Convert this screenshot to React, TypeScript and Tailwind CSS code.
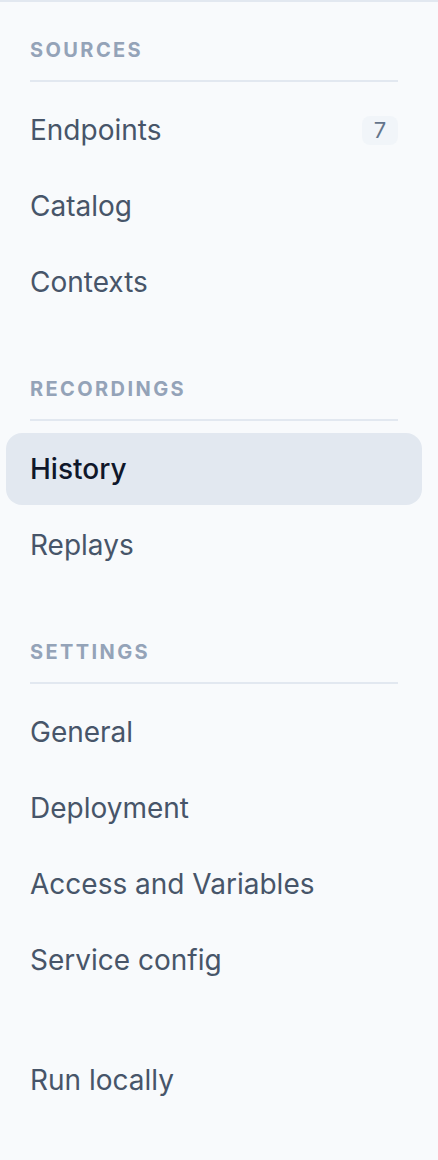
import React from "react";

type NavItem = {
  label: string;
  count?: number;
  active?: boolean;
};

type NavSection = {
  title: string;
  items: NavItem[];
};

const SECTIONS: NavSection[] = [
  {
    title: "Sources",
    items: [{ label: "Endpoints", count: 7 }, { label: "Catalog" }, { label: "Contexts" }],
  },
  {
    title: "Recordings",
    items: [{ label: "History", active: true }, { label: "Replays" }],
  },
  {
    title: "Settings",
    items: [
      { label: "General" },
      { label: "Deployment" },
      { label: "Access and Variables" },
      { label: "Service config" },
    ],
  },
];

function NavRow({ item }: { item: NavItem }) {
  return (
    <a
      href="#"
      className={`flex h-[72px] items-center justify-between rounded-2xl px-6 text-[28px] ${
        item.active
          ? "bg-[#e2e8f0] font-medium text-[#0f172a]"
          : "text-[#475569] hover:bg-[#f1f5f9]"
      }`}
    >
      <span>{item.label}</span>
      {item.count !== undefined && (
        <span className="flex h-[29px] w-9 items-center justify-center rounded-lg bg-[#f1f5f9] text-[22px] text-[#64748b]">
          {item.count}
        </span>
      )}
    </a>
  );
}

export default function App() {
  return (
    <div
      className="min-h-screen w-full border-t-2 border-[#e2e8f0] bg-[#f8fafc] pb-10 pl-1.5 pr-4 pt-[34px]"
      style={{ fontFamily: "Inter, 'Noto Sans', sans-serif" }}
    >
      <nav className="flex flex-col">
        {SECTIONS.map((section, i) => (
          <div key={section.title} className={i === 0 ? "" : "mt-[57px]"}>
            {/* section heading */}
            <div className="mx-6 border-b-2 border-[#e2e8f0] pb-4">
              <h3 className="text-[20px] font-bold uppercase leading-7 tracking-[0.12em] text-[#94a3b8]">
                {section.title}
              </h3>
            </div>
            <div className="mt-3 flex flex-col gap-1">
              {section.items.map((item) => (
                <NavRow key={item.label} item={item} />
              ))}
            </div>
          </div>
        ))}

        <div className="mt-12 flex flex-col gap-1">
          <NavRow item={{ label: "Run locally" }} />
        </div>
      </nav>
    </div>
  );
}
